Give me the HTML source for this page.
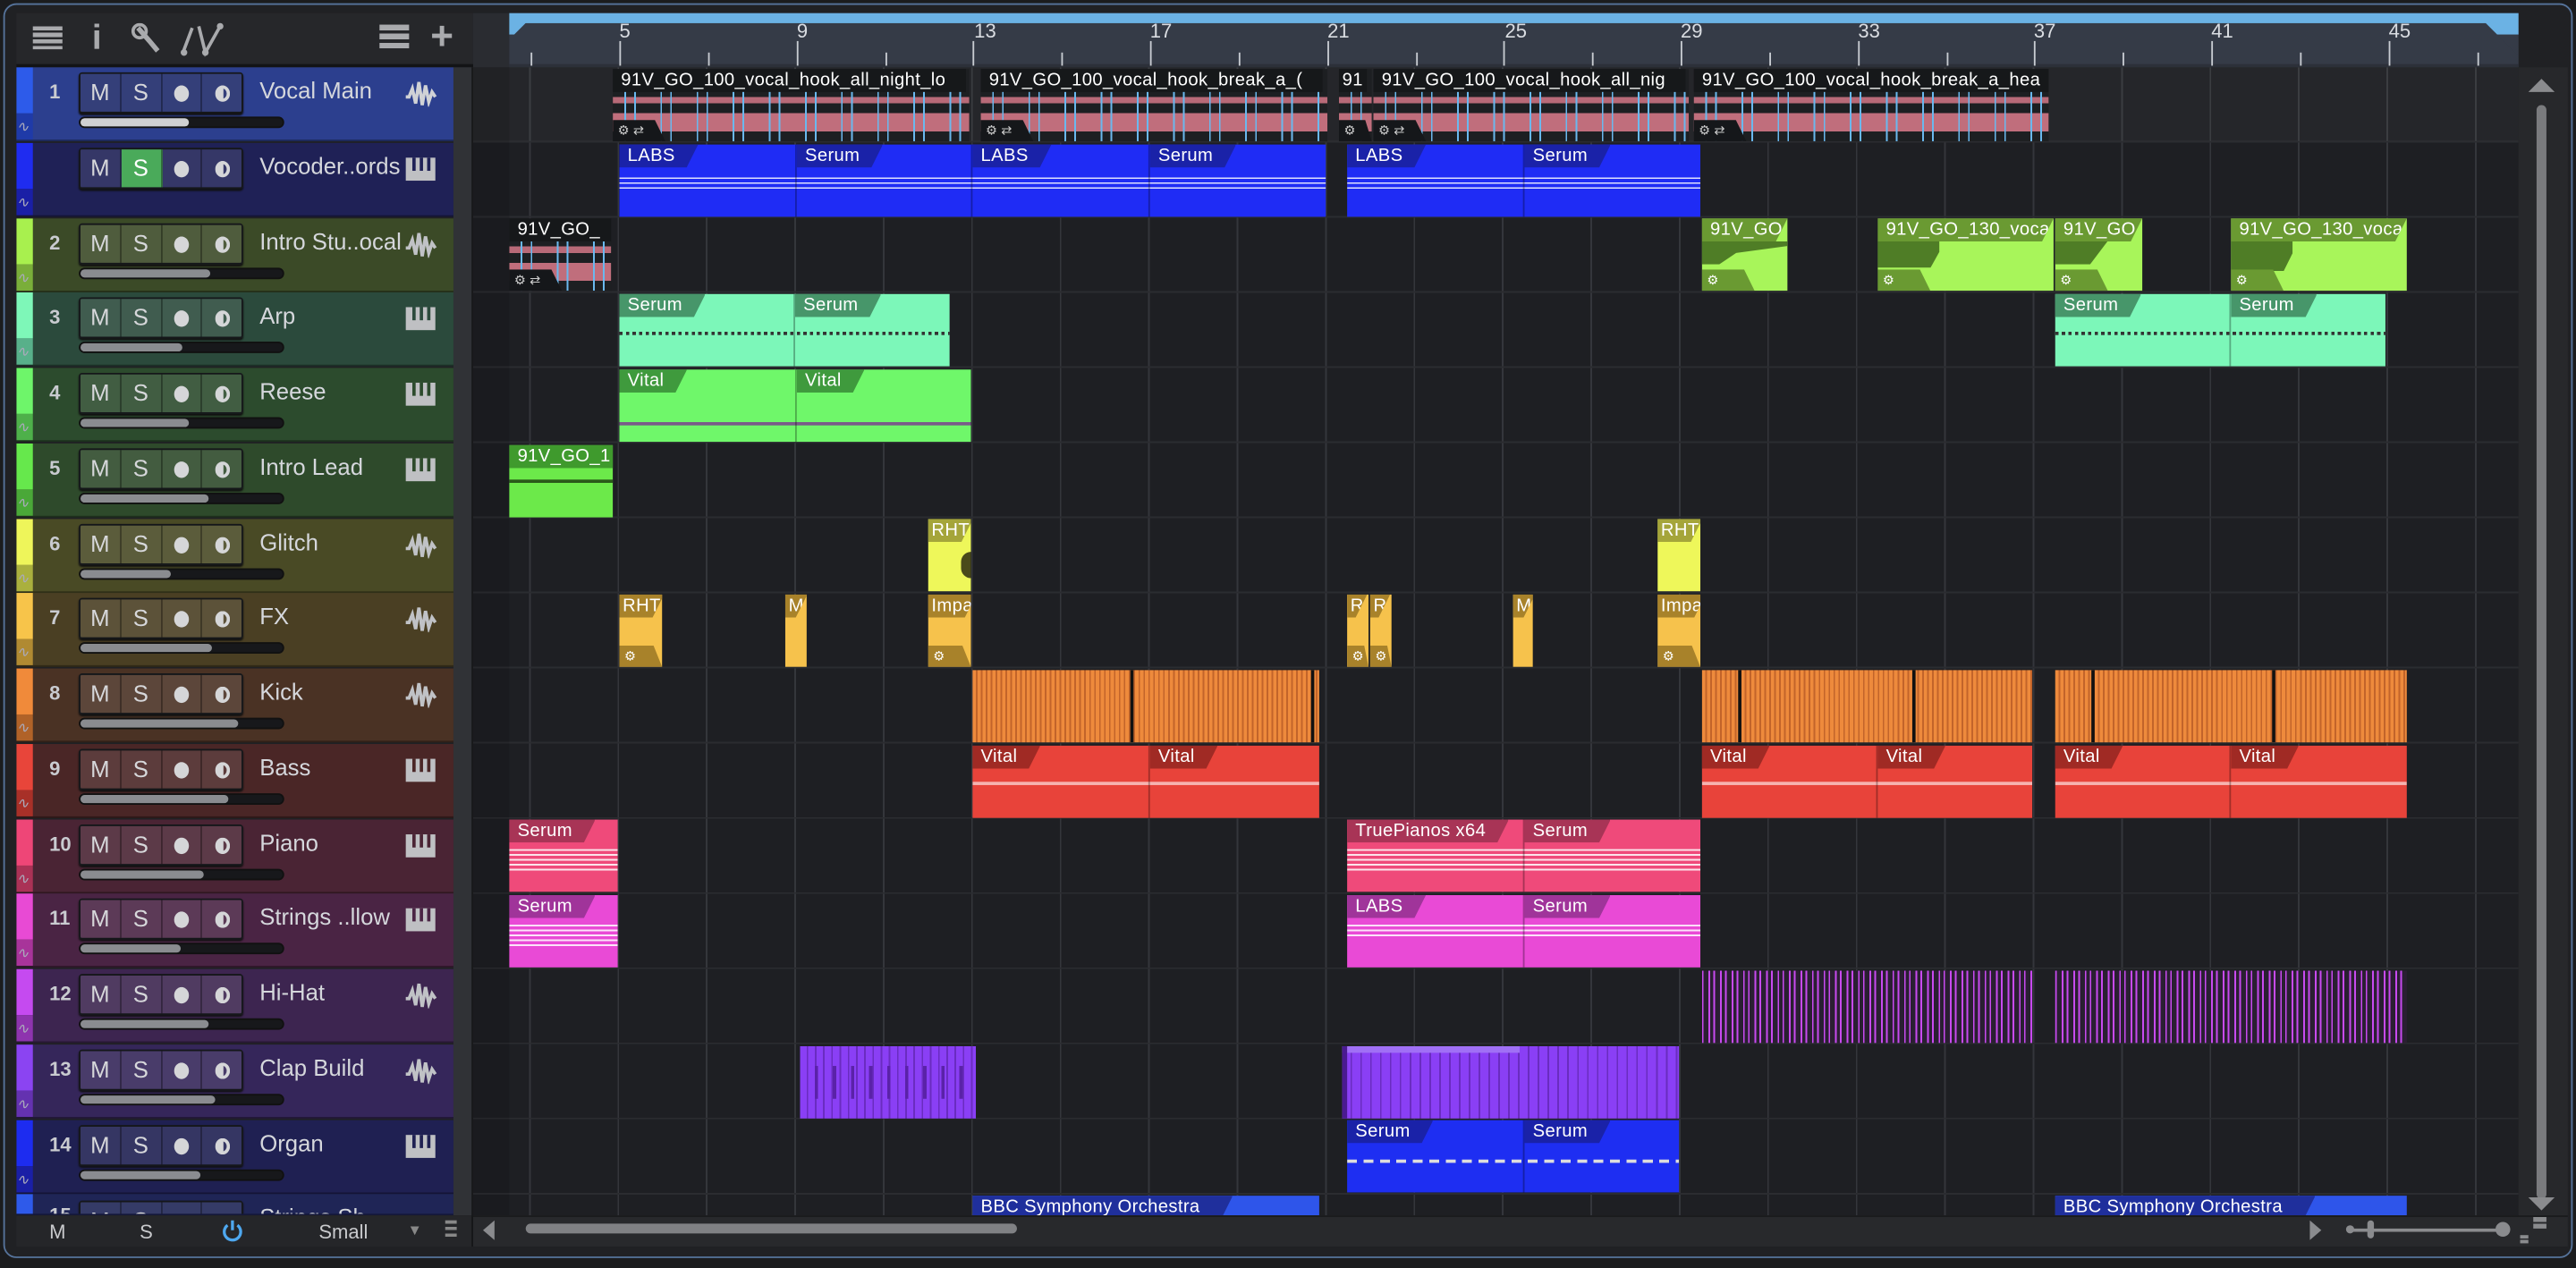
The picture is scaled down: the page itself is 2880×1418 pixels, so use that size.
<!DOCTYPE html>
<html><head><meta charset="utf-8"><style>
*{margin:0;padding:0;box-sizing:border-box}
html,body{width:2880px;height:1416px;overflow:hidden;background:#1b1c1e}
#w{position:absolute;left:0;top:0;width:1568px;height:771px;transform:scale(1.83673);transform-origin:0 0;font-family:"Liberation Sans",sans-serif;background:#1b1c1e}
.a{position:absolute}
.frame{left:2px;top:2px;width:1564px;height:764px;border:1px solid #56749c;border-radius:8px;background:#202124}
.th{position:absolute;left:10px;width:266px;height:45px;overflow:hidden;border-bottom:1px solid rgba(0,0,0,.35)}
.st{position:absolute;left:0;top:0;width:10px;height:28px}
.st2{position:absolute;left:0;top:28px;width:10px;height:17px;color:#aab;font-size:9px;line-height:17px;font-style:italic}
.num{position:absolute;left:20px;top:8px;width:10px;font-size:12px;font-weight:bold;color:#c9cbd0}
.btns{position:absolute;left:38px;top:3px;width:100px;height:25px;border:1px solid #15171a;border-radius:2px;display:flex;box-shadow:0 1px 1px #111}
.btns b{flex:1;font-weight:normal;color:#d6d7da;font-size:14px;text-align:center;line-height:23px;background:rgba(255,255,255,.1);border-right:1px solid rgba(0,0,0,.35)}
.btns b:last-child{border-right:0}
.dot{display:inline-block;width:9px;height:10px;border-radius:50%;background:#d5d6d8;vertical-align:-1px}
.mon{display:inline-block;width:9px;height:10px;border-radius:50%;border:2px solid #d5d6d8;border-left-width:5px;vertical-align:-1px}
.nm{position:absolute;left:148px;top:6px;font-size:14px;color:#d5d7dc;white-space:nowrap}
.ic{position:absolute;left:236px;top:8px}
.fd{position:absolute;left:38px;top:30px;width:125px;height:7px;background:#17181b;border-radius:4px;border:1px solid #111}
.fd i{display:block;height:100%;background:#8a8c90;border-radius:3px}
.c{position:absolute;height:44px;overflow:hidden}
.t{position:absolute;top:0;height:14px;font-size:11px;color:#fff;line-height:14px;padding:0 14px 0 5px;white-space:nowrap;clip-path:polygon(0 0,100% 0,calc(100% - 7px) 100%,0 100%);letter-spacing:.2px}
.n{position:absolute;left:0;right:0;top:23px;height:9px;background:repeating-linear-gradient(to bottom,rgba(255,255,255,.85) 0 1px,transparent 1px 3px)}
.sep{position:absolute;top:0;width:1px;height:44px;background:rgba(0,0,0,.3)}
.au{background:#1d1f22}
.au .t{background:#16181a;padding-right:12px;clip-path:none}
.wv{position:absolute;left:0;right:0;top:14px;height:30px;background:
repeating-linear-gradient(90deg,transparent 0 7px,#6ab8ee 7px 8px,transparent 8px 13px,#6ab8ee 13px 14px,transparent 14px 22px),
linear-gradient(to bottom,transparent 0 3px,#b86a78 3px 7px,transparent 7px 13px,#c06e7c 13px 24px,transparent 24px)}
.gr{position:absolute;left:0;bottom:0;width:32px;height:13px;background:#15171a;color:#ccc;font-size:8px;line-height:13px;padding-left:3px;clip-path:polygon(0 0,80% 0,100% 100%,0 100%)}
.tk{position:absolute;width:1px;background:#c8ccd2}
.rl{position:absolute;top:12px;font-size:12px;color:#dadde2}
</style></head><body><div id="w">
<div class="a frame"></div>
<div class="a" style="left:10px;top:8px;width:278px;height:33px;background:#26272a;border-bottom:2px solid #131416"></div>
<div class="a" style="left:20px;top:16px;width:18px;height:14px;background:repeating-linear-gradient(#a9aaad 0 2.5px,transparent 2.5px 4px)"></div>
<div class="a" style="left:56px;top:12px;color:#a9aaad;font-size:21px;font-weight:bold">i</div>
<svg class="a" style="left:80px;top:14px" width="20" height="20"><path d="M4 3 L11 11 L16 17" stroke="#a9aaad" stroke-width="3" fill="none"/><circle cx="5" cy="5" r="4" fill="none" stroke="#a9aaad" stroke-width="2"/></svg>
<svg class="a" style="left:109px;top:13px" width="28" height="22"><path d="M2 20 L8 4 M12 3 L16 19 L25 3" stroke="#a9aaad" stroke-width="2" fill="none"/><circle cx="3" cy="19" r="2" fill="#a9aaad"/><circle cx="16" cy="19" r="2" fill="#a9aaad"/><circle cx="25" cy="3" r="2" fill="#a9aaad"/></svg>
<div class="a" style="left:231px;top:15px;width:18px;height:15px;background:repeating-linear-gradient(#a9aaad 0 3.5px,transparent 3.5px 5.5px)"></div>
<div class="a" style="left:262px;top:14px;font-size:24px;color:#a9aaad;line-height:18px;font-weight:bold">+</div>
<div class="a" style="left:288px;top:8px;width:1245px;height:33px;background:#2a2c31"></div>
<div class="a" style="left:310px;top:8px;width:1223px;height:33px;background:#353b47"></div>
<div class="a" style="left:310px;top:8px;width:1223px;height:13px;background:#6bb2e4"></div>
<div class="a" style="left:310px;top:14px;width:1223px;height:27px;background:#353b47;clip-path:polygon(10px 0,calc(100% - 20px) 0,100% 20px,100% 100%,0 100%,0 10px)"></div>
<div class="a" style="left:310px;top:39px;width:1223px;height:2px;background:#2c3039"></div>
<div class="tk" style="left:323px;top:32px;height:8px"></div>
<div class="tk" style="left:377px;top:25px;height:15px"></div><div class="rl" style="left:377px">5</div>
<div class="tk" style="left:431px;top:32px;height:8px"></div>
<div class="tk" style="left:485px;top:25px;height:15px"></div><div class="rl" style="left:485px">9</div>
<div class="tk" style="left:539px;top:32px;height:8px"></div>
<div class="tk" style="left:592px;top:25px;height:15px"></div><div class="rl" style="left:593px">13</div>
<div class="tk" style="left:646px;top:32px;height:8px"></div>
<div class="tk" style="left:700px;top:25px;height:15px"></div><div class="rl" style="left:700px">17</div>
<div class="tk" style="left:754px;top:32px;height:8px"></div>
<div class="tk" style="left:808px;top:25px;height:15px"></div><div class="rl" style="left:808px">21</div>
<div class="tk" style="left:862px;top:32px;height:8px"></div>
<div class="tk" style="left:915px;top:25px;height:15px"></div><div class="rl" style="left:916px">25</div>
<div class="tk" style="left:969px;top:32px;height:8px"></div>
<div class="tk" style="left:1023px;top:25px;height:15px"></div><div class="rl" style="left:1023px">29</div>
<div class="tk" style="left:1077px;top:32px;height:8px"></div>
<div class="tk" style="left:1131px;top:25px;height:15px"></div><div class="rl" style="left:1131px">33</div>
<div class="tk" style="left:1185px;top:32px;height:8px"></div>
<div class="tk" style="left:1238px;top:25px;height:15px"></div><div class="rl" style="left:1238px">37</div>
<div class="tk" style="left:1292px;top:32px;height:8px"></div>
<div class="tk" style="left:1346px;top:25px;height:15px"></div><div class="rl" style="left:1346px">41</div>
<div class="tk" style="left:1400px;top:32px;height:8px"></div>
<div class="tk" style="left:1454px;top:25px;height:15px"></div><div class="rl" style="left:1454px">45</div>
<div class="tk" style="left:1508px;top:32px;height:8px"></div>
<div class="a" style="left:288px;top:41px;width:1245px;height:699px;background:
repeating-linear-gradient(to bottom,transparent 0 44.75px,#2b2c30 44.75px 45.75px),
repeating-linear-gradient(90deg,transparent 0 34px,#34363b 34px 35px,transparent 35px 53.84px),#1e1f23"></div>
<div class="a" style="left:288px;top:41px;width:1245px;height:45px;background:rgba(255,255,255,.035)"></div>
<div class="a" style="left:288px;top:41px;width:22px;height:699px;background:rgba(0,0,0,.1)"></div>
<div class="a" style="left:276px;top:41px;width:12px;height:699px;background:#303236;border-right:1px solid #17181a"></div>
<div class="a" style="left:1533px;top:41px;width:30px;height:699px;background:#27282b"></div>
<div class="a" style="left:1539px;top:48px;width:0;height:0;border-left:8px solid transparent;border-right:8px solid transparent;border-bottom:8px solid #8a8b8e"></div>
<div class="a" style="left:1544px;top:64px;width:6px;height:666px;background:#7a7b7e;border-radius:3px"></div>
<div class="a" style="left:1539px;top:729px;width:0;height:0;border-left:8px solid transparent;border-right:8px solid transparent;border-top:8px solid #8a8b8e"></div>

<div class="th" style="top:41px;background:#2c3f8e"><div class="st" style="background:#2d5bea"></div><div class="st2" style="background:#1f3aa8">∿</div><span class="num">1</span><div class="btns" style="background:#1d2a6a"><b>M</b><b>S</b><b><i class="dot"></i></b><b><i class="mon"></i></b></div><span class="nm">Vocal Main</span><svg class="ic" width="20" height="16"><path d="M1 10 L3 10 L5 5 L7 14 L9 1 L11 15 L13 3 L15 13 L17 7 L19 10" stroke="#d0d2d6" stroke-width="2" fill="none"/></svg><div class="fd"><i style="width:66px;background:#cfd0d2"></i></div></div>
<div class="th" style="top:87px;background:#1f2156"><div class="st" style="background:#1f2cf0"></div><div class="st2" style="background:#1a1fa6">∿</div><div class="btns"><b>M</b><b style="background:#4aaa5a;color:#fff">S</b><b><i class="dot"></i></b><b><i class="mon"></i></b></div><span class="nm">Vocoder..ords</span><svg class="ic" width="20" height="16"><rect x="1" y="1" width="18" height="14" fill="#bfc0c3"/><rect x="5" y="1" width="2" height="8" fill="#1f2156"/><rect x="9.5" y="1" width="2" height="8" fill="#1f2156"/><rect x="14" y="1" width="2" height="8" fill="#1f2156"/></svg></div>
<div class="th" style="top:132.5px;background:#3b4a27"><div class="st" style="background:#a8f04e"></div><div class="st2" style="background:#7aae3a">∿</div><span class="num">2</span><div class="btns"><b>M</b><b>S</b><b><i class="dot"></i></b><b><i class="mon"></i></b></div><span class="nm">Intro Stu..ocal</span><svg class="ic" width="20" height="16"><path d="M1 10 L3 10 L5 5 L7 14 L9 1 L11 15 L13 3 L15 13 L17 7 L19 10" stroke="#c0c2c6" stroke-width="2" fill="none"/></svg><div class="fd"><i style="width:79px"></i></div></div>
<div class="th" style="top:178px;background:#2b4a3c"><div class="st" style="background:#7ef7b8"></div><div class="st2" style="background:#58b08a">∿</div><span class="num">3</span><div class="btns"><b>M</b><b>S</b><b><i class="dot"></i></b><b><i class="mon"></i></b></div><span class="nm">Arp</span><svg class="ic" width="20" height="16"><rect x="1" y="1" width="18" height="14" fill="#bfc0c3"/><rect x="5" y="1" width="2" height="8" fill="#2b4a3c"/><rect x="9.5" y="1" width="2" height="8" fill="#2b4a3c"/><rect x="14" y="1" width="2" height="8" fill="#2b4a3c"/></svg><div class="fd"><i style="width:62px"></i></div></div>
<div class="th" style="top:224px;background:#2c4b2d"><div class="st" style="background:#6ef56a"></div><div class="st2" style="background:#4eb04a">∿</div><span class="num">4</span><div class="btns"><b>M</b><b>S</b><b><i class="dot"></i></b><b><i class="mon"></i></b></div><span class="nm">Reese</span><svg class="ic" width="20" height="16"><rect x="1" y="1" width="18" height="14" fill="#bfc0c3"/><rect x="5" y="1" width="2" height="8" fill="#2c4b2d"/><rect x="9.5" y="1" width="2" height="8" fill="#2c4b2d"/><rect x="14" y="1" width="2" height="8" fill="#2c4b2d"/></svg><div class="fd"><i style="width:66px"></i></div></div>
<div class="th" style="top:270px;background:#2e4a2b"><div class="st" style="background:#66e84c"></div><div class="st2" style="background:#4aa838">∿</div><span class="num">5</span><div class="btns"><b>M</b><b>S</b><b><i class="dot"></i></b><b><i class="mon"></i></b></div><span class="nm">Intro Lead</span><svg class="ic" width="20" height="16"><rect x="1" y="1" width="18" height="14" fill="#bfc0c3"/><rect x="5" y="1" width="2" height="8" fill="#2e4a2b"/><rect x="9.5" y="1" width="2" height="8" fill="#2e4a2b"/><rect x="14" y="1" width="2" height="8" fill="#2e4a2b"/></svg><div class="fd"><i style="width:78px"></i></div></div>
<div class="th" style="top:315.5px;background:#494a25"><div class="st" style="background:#eef55a"></div><div class="st2" style="background:#aab03e">∿</div><span class="num">6</span><div class="btns"><b>M</b><b>S</b><b><i class="dot"></i></b><b><i class="mon"></i></b></div><span class="nm">Glitch</span><svg class="ic" width="20" height="16"><path d="M1 10 L3 10 L5 5 L7 14 L9 1 L11 15 L13 3 L15 13 L17 7 L19 10" stroke="#c0c2c6" stroke-width="2" fill="none"/></svg><div class="fd"><i style="width:55px"></i></div></div>
<div class="th" style="top:361px;background:#4a3f23"><div class="st" style="background:#f7c44a"></div><div class="st2" style="background:#b08a32">∿</div><span class="num">7</span><div class="btns"><b>M</b><b>S</b><b><i class="dot"></i></b><b><i class="mon"></i></b></div><span class="nm">FX</span><svg class="ic" width="20" height="16"><path d="M1 10 L3 10 L5 5 L7 14 L9 1 L11 15 L13 3 L15 13 L17 7 L19 10" stroke="#c0c2c6" stroke-width="2" fill="none"/></svg><div class="fd"><i style="width:80px"></i></div></div>
<div class="th" style="top:407px;background:#4a3224"><div class="st" style="background:#f08a3a"></div><div class="st2" style="background:#b06228">∿</div><span class="num">8</span><div class="btns"><b>M</b><b>S</b><b><i class="dot"></i></b><b><i class="mon"></i></b></div><span class="nm">Kick</span><svg class="ic" width="20" height="16"><path d="M1 10 L3 10 L5 5 L7 14 L9 1 L11 15 L13 3 L15 13 L17 7 L19 10" stroke="#c0c2c6" stroke-width="2" fill="none"/></svg><div class="fd"><i style="width:96px"></i></div></div>
<div class="th" style="top:453px;background:#4a2626"><div class="st" style="background:#e8453a"></div><div class="st2" style="background:#a83028">∿</div><span class="num">9</span><div class="btns"><b>M</b><b>S</b><b><i class="dot"></i></b><b><i class="mon"></i></b></div><span class="nm">Bass</span><svg class="ic" width="20" height="16"><rect x="1" y="1" width="18" height="14" fill="#bfc0c3"/><rect x="5" y="1" width="2" height="8" fill="#4a2626"/><rect x="9.5" y="1" width="2" height="8" fill="#4a2626"/><rect x="14" y="1" width="2" height="8" fill="#4a2626"/></svg><div class="fd"><i style="width:90px"></i></div></div>
<div class="th" style="top:498.5px;background:#4a2434"><div class="st" style="background:#ee4677"></div><div class="st2" style="background:#aa3256">∿</div><span class="num">10</span><div class="btns"><b>M</b><b>S</b><b><i class="dot"></i></b><b><i class="mon"></i></b></div><span class="nm">Piano</span><svg class="ic" width="20" height="16"><rect x="1" y="1" width="18" height="14" fill="#bfc0c3"/><rect x="5" y="1" width="2" height="8" fill="#4a2434"/><rect x="9.5" y="1" width="2" height="8" fill="#4a2434"/><rect x="14" y="1" width="2" height="8" fill="#4a2434"/></svg><div class="fd"><i style="width:75px"></i></div></div>
<div class="th" style="top:544px;background:#4a2444"><div class="st" style="background:#e84ad4"></div><div class="st2" style="background:#a8349a">∿</div><span class="num">11</span><div class="btns"><b>M</b><b>S</b><b><i class="dot"></i></b><b><i class="mon"></i></b></div><span class="nm">Strings ..llow</span><svg class="ic" width="20" height="16"><rect x="1" y="1" width="18" height="14" fill="#bfc0c3"/><rect x="5" y="1" width="2" height="8" fill="#4a2444"/><rect x="9.5" y="1" width="2" height="8" fill="#4a2444"/><rect x="14" y="1" width="2" height="8" fill="#4a2444"/></svg><div class="fd"><i style="width:61px"></i></div></div>
<div class="th" style="top:590px;background:#3d2550"><div class="st" style="background:#c54af0"></div><div class="st2" style="background:#8e34ae">∿</div><span class="num">12</span><div class="btns"><b>M</b><b>S</b><b><i class="dot"></i></b><b><i class="mon"></i></b></div><span class="nm">Hi-Hat</span><svg class="ic" width="20" height="16"><path d="M1 10 L3 10 L5 5 L7 14 L9 1 L11 15 L13 3 L15 13 L17 7 L19 10" stroke="#c0c2c6" stroke-width="2" fill="none"/></svg><div class="fd"><i style="width:78px"></i></div></div>
<div class="th" style="top:636px;background:#35265a"><div class="st" style="background:#8b44f2"></div><div class="st2" style="background:#6432b0">∿</div><span class="num">13</span><div class="btns"><b>M</b><b>S</b><b><i class="dot"></i></b><b><i class="mon"></i></b></div><span class="nm">Clap Build</span><svg class="ic" width="20" height="16"><path d="M1 10 L3 10 L5 5 L7 14 L9 1 L11 15 L13 3 L15 13 L17 7 L19 10" stroke="#c0c2c6" stroke-width="2" fill="none"/></svg><div class="fd"><i style="width:82px"></i></div></div>
<div class="th" style="top:681.5px;background:#1f2052"><div class="st" style="background:#1d2cf0"></div><div class="st2" style="background:#1a1fa6">∿</div><span class="num">14</span><div class="btns"><b>M</b><b>S</b><b><i class="dot"></i></b><b><i class="mon"></i></b></div><span class="nm">Organ</span><svg class="ic" width="20" height="16"><rect x="1" y="1" width="18" height="14" fill="#bfc0c3"/><rect x="5" y="1" width="2" height="8" fill="#1f2052"/><rect x="9.5" y="1" width="2" height="8" fill="#1f2052"/><rect x="14" y="1" width="2" height="8" fill="#1f2052"/></svg><div class="fd"><i style="width:73px"></i></div></div>
<div class="th" style="top:727px;height:13px;background:#1f2556"><div class="st" style="background:#2e5aea"></div><span class="num" style="top:6px">15</span><div class="btns" style="top:4px"><b>M</b><b>S</b><b><i class="dot"></i></b><b><i class="mon"></i></b></div><span class="nm" style="top:6px">Strings Sh</span></div>

<div class="a" style="left:0;top:0;width:1568px;height:771px;clip-path:inset(41px 35px 31px 288px)">
<div class="c au" style="left:373px;top:42px;width:217px"><div class="t">91V_GO_100_vocal_hook_all_night_lo</div><div class="wv"></div><div class="gr">⚙ ⇄</div></div>
<div class="c au" style="left:597px;top:42px;width:211px"><div class="t">91V_GO_100_vocal_hook_break_a_(</div><div class="wv"></div><div class="gr">⚙ ⇄</div></div>
<div class="c au" style="left:815px;top:42px;width:20px"><div class="t" style="padding:0 2px">91</div><div class="wv"></div><div class="gr" style="width:20px">⚙</div></div>
<div class="c au" style="left:836px;top:42px;width:192px"><div class="t">91V_GO_100_vocal_hook_all_nig</div><div class="wv"></div><div class="gr">⚙ ⇄</div></div>
<div class="c au" style="left:1031px;top:42px;width:216px"><div class="t">91V_GO_100_vocal_hook_break_a_hea</div><div class="wv"></div><div class="gr">⚙ ⇄</div></div>
<div class="c" style="left:377px;top:88px;width:430px;background:#1f2cf5"><div class="t" style="background:#1a22a8">LABS</div><div class="t" style="left:108px;background:#1a22a8">Serum</div><div class="t" style="left:215px;background:#1a22a8">LABS</div><div class="t" style="left:323px;background:#1a22a8">Serum</div><div class="n" style="top:20px"></div><div class="sep" style="left:107px"></div><div class="sep" style="left:214px"></div><div class="sep" style="left:322px"></div></div>
<div class="c" style="left:820px;top:88px;width:215px;background:#1f2cf5"><div class="t" style="background:#1a22a8">LABS</div><div class="t" style="left:108px;background:#1a22a8">Serum</div><div class="n" style="top:20px"></div><div class="sep" style="left:107px"></div></div>
<div class="c au" style="left:310px;top:133px;width:62px"><div class="t">91V_GO_</div><div class="wv"></div><div class="gr">⚙ ⇄</div></div>
<div class="c" style="left:1036px;top:133px;width:52px;background:#a8f55a"><div class="t" style="background:#6a9a32;width:100%">91V_GO_</div><div class="a" style="left:0;top:14px;width:100%;height:14px;background:#4f7d26;clip-path:polygon(0 0,100% 0,100% 20%,40% 50%,20% 100%,0 100%)"></div><div class="gr" style="background:#6a9a32;color:#fff">⚙</div></div>
<div class="c" style="left:1143px;top:133px;width:107px;background:#a8f55a"><div class="t" style="background:#6a9a32;width:100%">91V_GO_130_voca</div><div class="a" style="left:0;top:14px;width:100%;height:16px;background:#4f7d26;clip-path:polygon(0 0,35% 0,35% 40%,30% 100%,0 100%)"></div><div class="gr" style="background:#6a9a32;color:#fff">⚙</div></div>
<div class="c" style="left:1251px;top:133px;width:53px;background:#a8f55a"><div class="t" style="background:#6a9a32;width:100%">91V_GO</div><div class="a" style="left:0;top:14px;width:100%;height:14px;background:#4f7d26;clip-path:polygon(0 0,60% 0,40% 100%,0 100%)"></div><div class="gr" style="background:#6a9a32;color:#fff">⚙</div></div>
<div class="c" style="left:1358px;top:133px;width:107px;background:#a8f55a"><div class="t" style="background:#6a9a32;width:100%">91V_GO_130_voca</div><div class="a" style="left:0;top:14px;width:100%;height:18px;background:#4f7d26;clip-path:polygon(0 0,35% 0,35% 40%,30% 100%,0 100%)"></div><div class="gr" style="background:#6a9a32;color:#fff">⚙</div></div>
<div class="c" style="left:377px;top:179px;width:201px;background:#7cf7b9"><div class="t" style="background:#47966a">Serum</div><div class="t" style="left:107px;background:#47966a">Serum</div><div class="a" style="left:0;right:0;top:23px;height:2px;background:repeating-linear-gradient(90deg,#333 0 2px,transparent 2px 4px)"></div><div class="sep" style="left:106px"></div></div>
<div class="c" style="left:1251px;top:179px;width:201px;background:#7cf7b9"><div class="t" style="background:#47966a">Serum</div><div class="t" style="left:107px;background:#47966a">Serum</div><div class="a" style="left:0;right:0;top:23px;height:2px;background:repeating-linear-gradient(90deg,#333 0 2px,transparent 2px 4px)"></div><div class="sep" style="left:106px"></div></div>
<div class="c" style="left:377px;top:225px;width:214px;background:#6ff76a"><div class="t" style="background:#3f9a3d">Vital</div><div class="t" style="left:108px;background:#3f9a3d">Vital</div><div class="a" style="left:0;right:0;top:32px;height:2px;background:#7a5a8a"></div><div class="sep" style="left:107px"></div></div>
<div class="c" style="left:310px;top:271px;width:63px;background:#6ce94a"><div class="t" style="background:#3f9a2d">91V_GO_1</div><div class="a" style="left:0;right:0;top:21px;height:2px;background:#2a5a1a"></div></div>
<div class="c" style="left:565px;top:316px;width:26px;background:#eef75a"><div class="t" style="background:#a5a53a;padding:0 2px">RHT</div><div class="a" style="left:20px;top:20px;width:6px;height:16px;background:#4a4a1a;border-radius:6px 0 0 6px"></div></div>
<div class="c" style="left:1009px;top:316px;width:26px;background:#eef75a"><div class="t" style="background:#a5a53a;padding:0 2px">RHT</div></div>
<div class="c" style="left:377px;top:362px;width:26px;background:#f6c24c"><div class="t" style="background:#a8822a;padding:0 2px">RHT</div><div class="gr" style="background:#a8822a;color:#fff;width:26px">⚙</div></div>
<div class="c" style="left:478px;top:362px;width:13px;background:#f6c24c"><div class="t" style="background:#a8822a;padding:0 2px">M</div></div>
<div class="c" style="left:565px;top:362px;width:26px;background:#f6c24c"><div class="t" style="background:#a8822a;padding:0 2px">Impa</div><div class="gr" style="background:#a8822a;color:#fff;width:26px">⚙</div></div>
<div class="c" style="left:820px;top:362px;width:13px;background:#f6c24c"><div class="t" style="background:#a8822a;padding:0 2px">R</div><div class="gr" style="background:#a8822a;color:#fff;width:13px">⚙</div></div>
<div class="c" style="left:834px;top:362px;width:13px;background:#f6c24c"><div class="t" style="background:#a8822a;padding:0 2px">R</div><div class="gr" style="background:#a8822a;color:#fff;width:13px">⚙</div></div>
<div class="c" style="left:921px;top:362px;width:12px;background:#f6c24c"><div class="t" style="background:#a8822a;padding:0 2px">M</div></div>
<div class="c" style="left:1009px;top:362px;width:26px;background:#f6c24c"><div class="t" style="background:#a8822a;padding:0 2px">Impa</div><div class="gr" style="background:#a8822a;color:#fff;width:26px">⚙</div></div>
<div class="c" style="left:592px;top:408px;width:211px;background:repeating-linear-gradient(90deg,#ee8a3c 0 2px,#c2642a 2px 3px)"><div class="a" style="left:96px;top:0;width:2px;height:44px;background:#111"></div><div class="a" style="left:206px;top:0;width:2px;height:44px;background:#111"></div></div>
<div class="c" style="left:1036px;top:408px;width:201px;background:repeating-linear-gradient(90deg,#ee8a3c 0 2px,#c2642a 2px 3px)"><div class="a" style="left:22px;top:0;width:2px;height:44px;background:#111"></div><div class="a" style="left:128px;top:0;width:2px;height:44px;background:#111"></div></div>
<div class="c" style="left:1251px;top:408px;width:214px;background:repeating-linear-gradient(90deg,#ee8a3c 0 2px,#c2642a 2px 3px)"><div class="a" style="left:22px;top:0;width:2px;height:44px;background:#111"></div><div class="a" style="left:132px;top:0;width:2px;height:44px;background:#111"></div></div>
<div class="c" style="left:592px;top:454px;width:211px;background:#e8433a"><div class="t" style="background:#a02a24">Vital</div><div class="t" style="left:108px;background:#a02a24">Vital</div><div class="a" style="left:0;right:0;top:22px;height:2px;background:rgba(255,255,255,.6)"></div><div class="sep" style="left:107px"></div></div>
<div class="c" style="left:1036px;top:454px;width:201px;background:#e8433a"><div class="t" style="background:#a02a24">Vital</div><div class="t" style="left:107px;background:#a02a24">Vital</div><div class="a" style="left:0;right:0;top:22px;height:2px;background:rgba(255,255,255,.6)"></div><div class="sep" style="left:106px"></div></div>
<div class="c" style="left:1251px;top:454px;width:214px;background:#e8433a"><div class="t" style="background:#a02a24">Vital</div><div class="t" style="left:107px;background:#a02a24">Vital</div><div class="a" style="left:0;right:0;top:22px;height:2px;background:rgba(255,255,255,.6)"></div><div class="sep" style="left:106px"></div></div>
<div class="c" style="left:310px;top:499px;width:66px;background:#ef4a7a"><div class="t" style="background:#a83456">Serum</div><div class="n" style="top:18px;height:14px"></div></div>
<div class="c" style="left:820px;top:499px;width:215px;background:#ef4a7a"><div class="t" style="background:#a83456">TruePianos x64</div><div class="t" style="left:108px;background:#a83456">Serum</div><div class="n" style="top:18px;height:14px"></div><div class="sep" style="left:107px"></div></div>
<div class="c" style="left:310px;top:545px;width:66px;background:#e94ad6"><div class="t" style="background:#a0349a">Serum</div><div class="n" style="top:18px;height:14px"></div></div>
<div class="c" style="left:820px;top:545px;width:215px;background:#e94ad6"><div class="t" style="background:#a0349a">LABS</div><div class="t" style="left:108px;background:#a0349a">Serum</div><div class="n" style="top:18px;height:8px"></div><div class="sep" style="left:107px"></div></div>
<div class="c" style="left:1036px;top:591px;width:201px;background:repeating-linear-gradient(90deg,#c84af0 0 1px,#2a1f32 1px 4px,#c84af0 4px 5px,#2a1f32 5px 7px)"></div>
<div class="c" style="left:1251px;top:591px;width:214px;background:repeating-linear-gradient(90deg,#c84af0 0 1px,#2a1f32 1px 4px,#c84af0 4px 5px,#2a1f32 5px 7px)"></div>
<div class="c" style="left:487px;top:637px;width:107px;background:repeating-linear-gradient(90deg,#8a3ff5 0 4px,#6a2cc0 4px 5px)"><div class="a" style="left:0;right:0;top:12px;height:20px;background:repeating-linear-gradient(90deg,transparent 0 9px,#5a22a8 9px 11px)"></div></div>
<div class="c" style="left:817px;top:637px;width:205px;background:repeating-linear-gradient(90deg,#8a3ff5 0 5px,#6a2cc0 5px 6px)"><div class="a" style="left:0;top:0;width:108px;height:4px;background:#a070f5"></div><div class="a" style="left:0;top:0;width:3px;height:44px;background:#4a1a90"></div></div>
<div class="c" style="left:820px;top:682px;width:202px;background:#1e2ef2"><div class="t" style="background:#1a22a8">Serum</div><div class="t" style="left:108px;background:#1a22a8">Serum</div><div class="a" style="left:0;right:0;top:24px;height:2px;background:repeating-linear-gradient(90deg,#ddd 0 6px,transparent 6px 10px)"></div><div class="sep" style="left:107px"></div></div>
<div class="c" style="left:592px;top:728px;width:211px;background:#2e55ea"><div class="t" style="background:#1f2f9c;padding-right:20px">BBC Symphony Orchestra</div></div>
<div class="c" style="left:1251px;top:728px;width:214px;background:#2e55ea"><div class="t" style="background:#1f2f9c;padding-right:20px">BBC Symphony Orchestra</div></div>
</div>

<div class="a" style="left:10px;top:740px;width:1553px;height:19px;background:#28292c;border-top:1px solid #1a1b1d"></div>
<div class="a" style="left:10px;top:740px;width:278px;height:19px;background:#252629;border-right:1px solid #151618"></div>
<div class="a" style="left:30px;top:743px;font-size:12px;color:#c8c9cc">M</div>
<div class="a" style="left:85px;top:743px;font-size:12px;color:#c8c9cc">S</div>
<svg class="a" style="left:135px;top:742px" width="13" height="14"><path d="M3.5 4 A5 5 0 1 0 9.5 4" stroke="#4ea8f0" stroke-width="1.8" fill="none"/><path d="M6.5 1 V7" stroke="#4ea8f0" stroke-width="1.8"/></svg>
<div class="a" style="left:194px;top:743px;font-size:12px;color:#c8c9cc">Small</div>
<div class="a" style="left:248px;top:744px;font-size:9px;color:#888">▼</div>
<div class="a" style="left:271px;top:743px;width:7px;height:11px;background:repeating-linear-gradient(#888 0 2px,transparent 2px 4px)"></div>
<div class="a" style="left:294px;top:743px;width:0;height:0;border-top:6px solid transparent;border-bottom:6px solid transparent;border-right:7px solid #8a8b8e"></div>
<div class="a" style="left:320px;top:745px;width:299px;height:6px;background:#808184;border-radius:3px"></div>
<div class="a" style="left:1406px;top:743px;width:0;height:0;border-top:6px solid transparent;border-bottom:6px solid transparent;border-left:7px solid #8a8b8e"></div>
<div class="a" style="left:1430px;top:748px;width:95px;height:2px;background:#8a8b8e"></div>
<div class="a" style="left:1428px;top:746px;width:5px;height:5px;border-radius:50%;background:#8a8b8e"></div>
<div class="a" style="left:1441px;top:743px;width:4px;height:11px;border-radius:2px;background:#8a8b8e"></div>
<div class="a" style="left:1519px;top:744px;width:9px;height:9px;border-radius:50%;background:#8a8b8e"></div>
<div class="a" style="left:1542px;top:741px;width:8px;height:7px;background:repeating-linear-gradient(#8a8b8e 0 3px,transparent 3px 4px)"></div>
<div class="a" style="left:1534px;top:752px;width:5px;height:5px;background:repeating-linear-gradient(#8a8b8e 0 2px,transparent 2px 3px)"></div>
</div></body></html>
